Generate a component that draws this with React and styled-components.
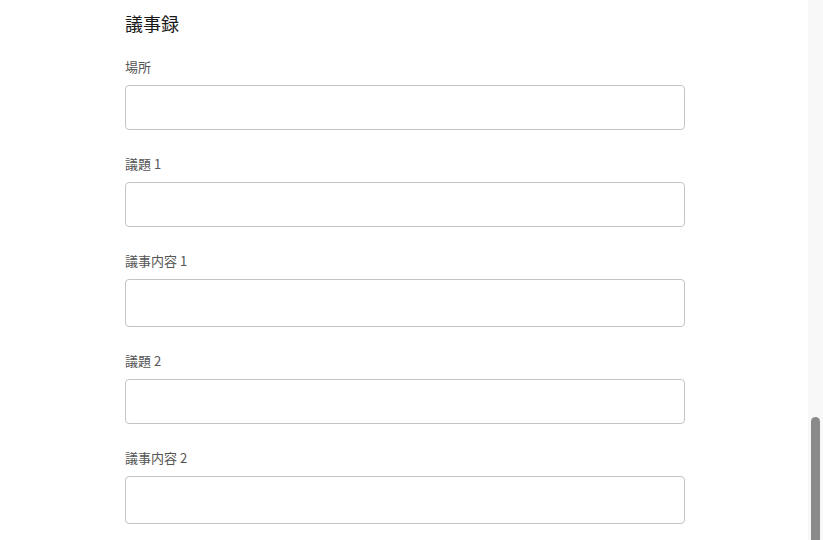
import styled, { createGlobalStyle } from "styled-components"

const GlobalStyle = createGlobalStyle`
    html, body {
        margin: 0;
        padding: 0;
        background: #ffffff;
    }
    body {
        font-family: "Noto Sans CJK JP", "Noto Sans", sans-serif;
    }
`

const Page = styled.div`
    display: flex;
    height: 540px;
    overflow: hidden;
`

const Main = styled.main`
    flex: 1;
    padding: 9px 0 0 125px;
`

const Form = styled.form`
    width: 560px;
    display: flex;
    flex-direction: column;
`

const Title = styled.h2`
    margin: 0 0 20px;
    font-size: 18px;
    line-height: 28px;
    font-weight: 400;
    color: #1a1a1a;
`

const Field = styled.div`
    display: flex;
    flex-direction: column;
    margin-bottom: 24px;
`

const Label = styled.label`
    font-size: 13px;
    line-height: 20px;
    color: #555555;
    margin-bottom: 8px;
`

const Input = styled.input`
    box-sizing: border-box;
    width: 100%;
    height: ${p => p.$tall ? "48px" : "45px"};
    border: 1px solid #c4c4c4;
    border-radius: 4px;
    padding: 0 12px;
    font: inherit;
    background: #fff;
    outline: none;
`

const Track = styled.div`
    width: 15px;
    background: #f8f8f8;
    display: flex;
    flex-direction: column;
    align-items: center;
    padding-top: 417px;
    box-sizing: border-box;
`

const Thumb = styled.div`
    flex: 1;
    width: 9px;
    background: #8a8a8a;
    border-radius: 5px 5px 0 0;
`

const fields = [
    { label: "場所" },
    { label: "議題 1" },
    { label: "議事内容 1", tall: true },
    { label: "議題 2" },
    { label: "議事内容 2", tall: true },
]

export default function App() {
    return (
        <>
            <GlobalStyle />
            <Page>
                <Main>
                    <Form onSubmit={e => e.preventDefault()}>
                        <Title>議事録</Title>
                        {fields.map((f, i) => (
                            <Field key={i}>
                                <Label htmlFor={"f" + i}>{f.label}</Label>
                                <Input id={"f" + i} $tall={f.tall} />
                            </Field>
                        ))}
                    </Form>
                </Main>
                <Track>
                    <Thumb />
                </Track>
            </Page>
        </>
    )
}
